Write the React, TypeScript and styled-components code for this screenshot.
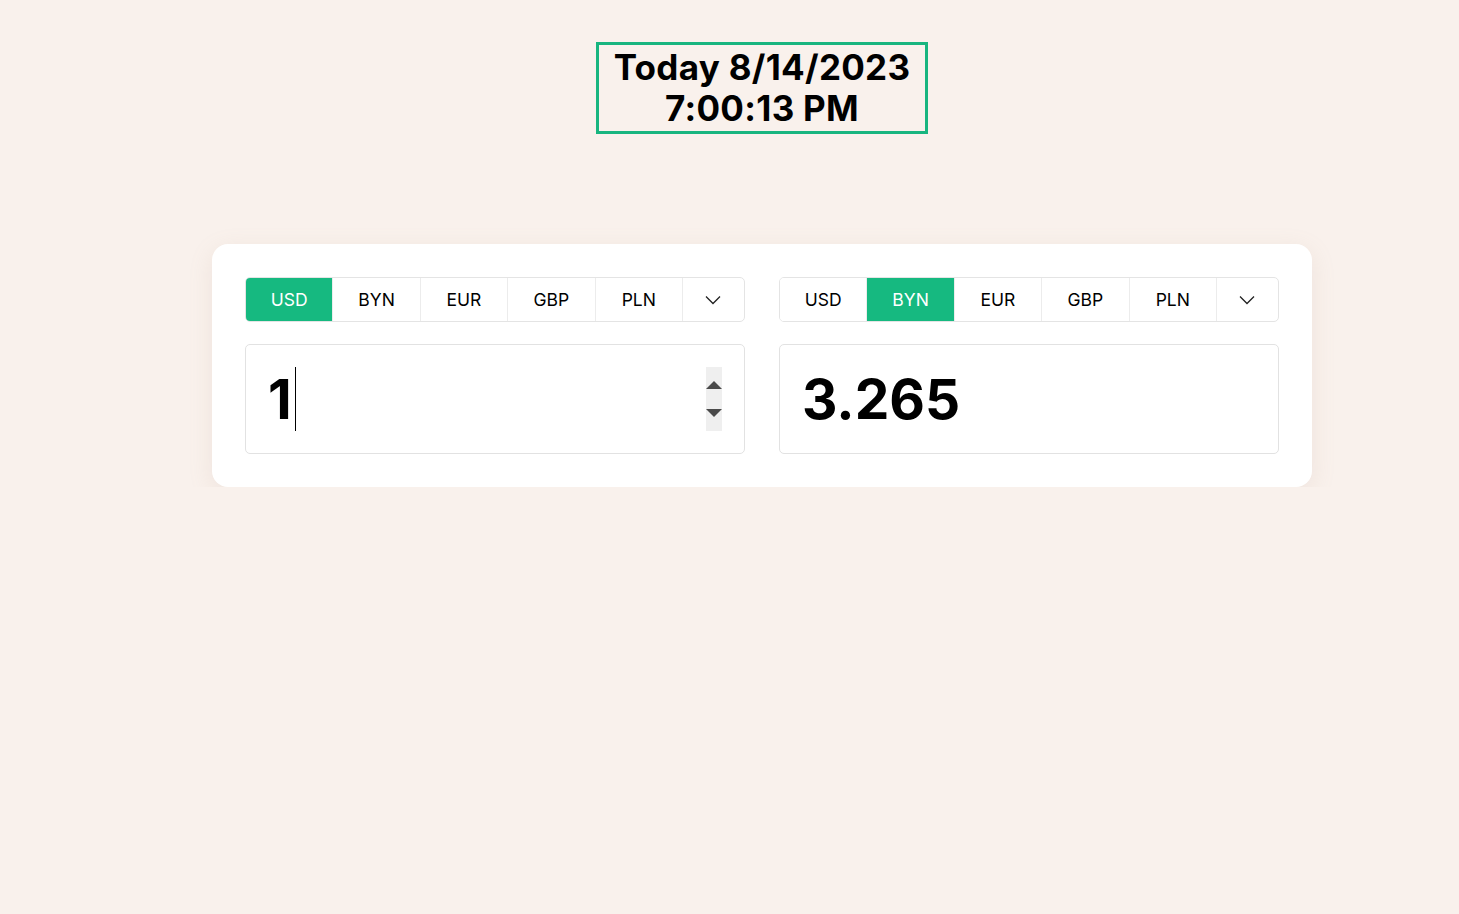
import React from "react";
import styled, { createGlobalStyle } from "styled-components";

const Global = createGlobalStyle`
  html, body { margin: 0; padding: 0; background: #f9f1ec; }
  body { font-family: Inter, "Noto Sans", sans-serif; color: #000; }
`;

const Page = styled.div`
  width: 1100px;
  margin-left: 212px;
  padding-top: 42px;
  display: flex;
  flex-direction: column;
  align-items: center;
`;

const Clock = styled.div`
  border: 3px solid #18b57f;
  padding: 2px 15px 2px;
  font-size: 35px;
  font-weight: 700;
  line-height: 41px;
  text-align: center;
  letter-spacing: 0.3px;
`;

const Card = styled.div`
  margin-top: 110px;
  align-self: stretch;
  background: #fff;
  border-radius: 16px;
  box-shadow: 0 6px 24px rgba(180, 150, 130, 0.14);
  padding: 33px;
  display: grid;
  grid-template-columns: 500px 500px;
  justify-content: space-between;
`;

const Block = styled.div`
  display: flex;
  flex-direction: column;
  gap: 22px;
`;

const Tabs = styled.div`
  display: flex;
  height: 45px;
  box-sizing: border-box;
  border: 1px solid #e4e4e4;
  border-radius: 5px;
  overflow: hidden;
`;

const Tab = styled.div<{ $active?: boolean }>`
  flex: 0 0 87.4px;
  display: flex;
  align-items: center;
  justify-content: center;
  font-size: 17.5px;
  background: ${(p) => (p.$active ? "#16b980" : "#fff")};
  color: ${(p) => (p.$active ? "#fff" : "#000")};
  border-right: 1px solid #ececec;
  box-sizing: border-box;
`;

const More = styled.div`
  flex: 1;
  display: flex;
  align-items: center;
  justify-content: center;
`;

const Field = styled.div`
  height: 110px;
  box-sizing: border-box;
  border: 1px solid #e2e2e2;
  border-radius: 5px;
  display: flex;
  align-items: center;
  padding: 0 22px 0 22px;
`;

const Value = styled.div`
  font-size: 55px;
  font-weight: 700;
  line-height: 1;
`;

const Caret = styled.span`
  display: inline-block;
  width: 1px;
  height: 64px;
  background: #000;
  margin-left: 3px;
`;

const Spinner = styled.div`
  margin-left: auto;
  width: 16px;
  height: 64px;
  background: #efefef;
  display: flex;
  flex-direction: column;
  justify-content: center;
  align-items: center;
  gap: 20px;
`;

const Arrow = styled.div<{ $down?: boolean }>`
  width: 0;
  height: 0;
  border-left: 8px solid transparent;
  border-right: 8px solid transparent;
  ${(p) =>
    p.$down
      ? "border-top: 8px solid #4a4a4a;"
      : "border-bottom: 8px solid #4a4a4a;"}
`;

const Chevron = () => (
  <svg width="18" height="18" viewBox="0 0 18 18" fill="none">
    <path d="M2 5.5 L9 12.5 L16 5.5" stroke="#222" strokeWidth="1.3" />
  </svg>
);

const codes = ["USD", "BYN", "EUR", "GBP", "PLN"];

const TabRow = ({ active }: { active: string }) => (
  <Tabs>
    {codes.map((c) => (
      <Tab key={c} $active={c === active}>
        {c}
      </Tab>
    ))}
    <More>
      <Chevron />
    </More>
  </Tabs>
);

export default function App() {
  return (
    <>
      <Global />
      <Page>
        <Clock>
          Today 8/14/2023
          <br />
          7:00:13 PM
        </Clock>
        <Card>
          <Block>
            <TabRow active="USD" />
            <Field>
              <Value>1</Value>
              <Caret />
              <Spinner>
                <Arrow />
                <Arrow $down />
              </Spinner>
            </Field>
          </Block>
          <Block>
            <TabRow active="BYN" />
            <Field>
              <Value>3.265</Value>
            </Field>
          </Block>
        </Card>
      </Page>
    </>
  );
}
